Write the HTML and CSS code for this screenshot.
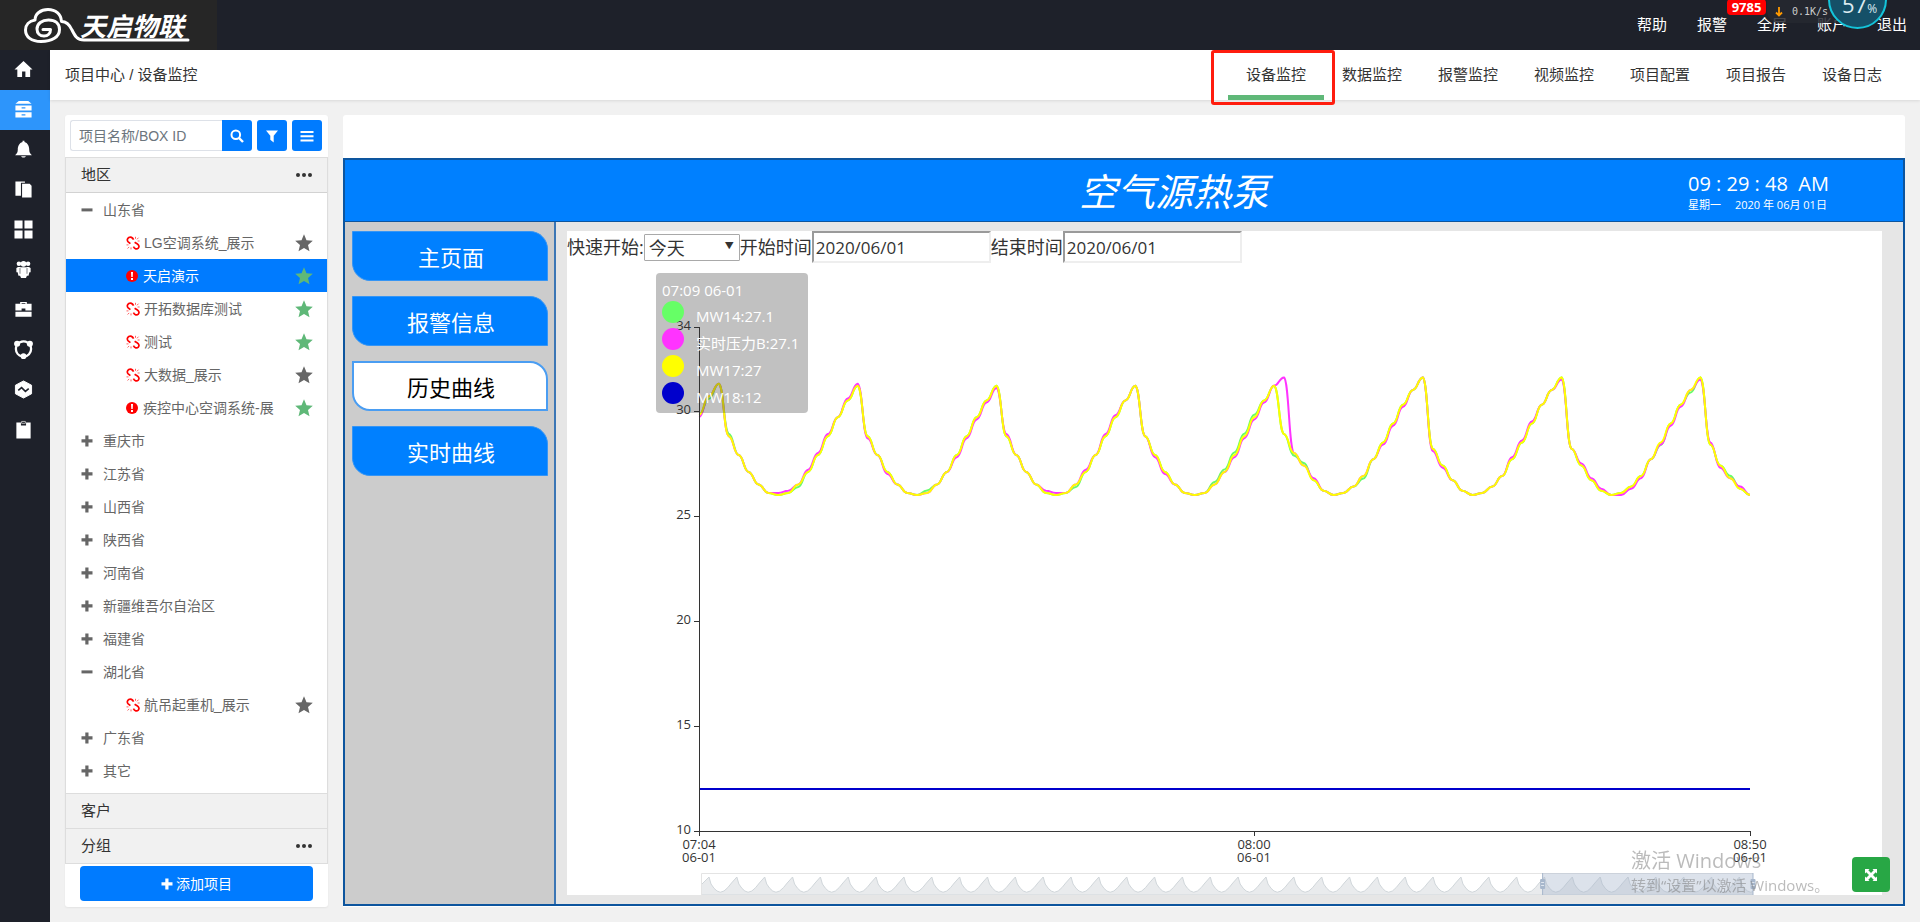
FILE: index.html
```html
<!DOCTYPE html>
<html lang="zh-CN">
<head>
<meta charset="utf-8">
<title>设备监控</title>
<link rel="stylesheet" href="styles.css">
</head>
<body>
<svg class="defs" aria-hidden="true">
  <symbol id="star" viewBox="0 0 18 18"><path d="M9 .3l2.500 5.900 6.300.5-4.800 4.200 1.500 6.300L9 13.900l-5.500 3.300 1.500-6.300L.2 6.700l6.300-.5z"/></symbol>
  <symbol id="plus" viewBox="0 0 12 12"><path d="M4.300.5h3.200v3.800h4v3.100h-4v4.100H4.300V7.400H.5V4.300h3.800z"/></symbol>
  <symbol id="minus" viewBox="0 0 12 12"><path d="M.5 4.400h11v3H.5z"/></symbol>
  <symbol id="unlink" viewBox="0 0 14 14"><g fill="none" stroke="#f00" stroke-width="1.700"><path d="M7.600 3.600C6.500 1.300 4.500.6 2.800 1.500 1 2.600.9 4.600 2.200 5.900l2.200 1.700"/><path d="M8.600 6.200l2.500 1.500c2 1.300 2.400 3.200 1.200 4.400-1.400 1.400-3.600 1-4.900-1.400"/></g><path d="M9.500.8v2M12.500 1.700L11 3.300M13.600 5h-2M.5 8.900h2M1.600 12.500l1.600-1.600M5 13.400v-2" stroke="#ff6060" fill="none"/></symbol>
  <symbol id="alert" viewBox="0 0 12 12"><circle cx="6" cy="6" r="6" fill="#f00"/><path d="M5 2h2l-.3 5H5.300zM5 8h2v2H5z" fill="currentColor"/></symbol>
</svg>

<header class="top">
  <a class="logo" href="#" aria-label="天启物联">
    <svg viewBox="0 0 217 50" width="217" height="50">
      <g fill="none" stroke="#fff" stroke-width="3" stroke-linecap="round" stroke-linejoin="round">
        <path d="M188 40H84c-7 0-9-4-12-10-2.500-5.500-5-8.500-10.500-8.500C61 14 55.500 9.500 48 9.500S35 14 35 20c-6 1-9.500 5-9.500 10 0 7 6 11.500 15.500 11.500 11 0 18.500-4.500 18.500-12 0-6-4.500-9.500-11-9.500S37 23.500 37 29c0 4.500 3 7 7 7s6.500-2.500 6.500-6.500H43"/>
      </g>
      <text x="80" y="36" class="logo-text">天启物联</text>
    </svg>
  </a>
  <nav class="top-nav">
    <a href="#">帮助</a>
    <a href="#">报警<span class="badge">9785</span></a>
    <a href="#">全屏</a>
    <a href="#">账户</a>
    <a href="#">退出</a>
  </nav>
  <div class="speed">
    <div class="speed-rate">
      <svg viewBox="0 0 8 10" width="8" height="10"><path d="M4 0v8M1 5.500l3 3 3-3" fill="none" stroke="#ff9a00" stroke-width="1.800"/></svg>
      <span>0.1K/s</span>
    </div>
    <div class="speed-ball"><span>57<small>%</small></span></div>
  </div>
</header>

<div class="shell">
  <nav class="rail">
    <a href="#" aria-label="首页"><svg viewBox="0 0 20 20"><path d="M10 1l9.500 9H17v8h-5v-6H8.500v6H3.500v-8H.5z"/></svg></a>
    <a href="#" class="on" aria-label="项目"><svg viewBox="0 0 20 20"><path d="M5 1h10l3.500 3h-17zM1.500 5.800h17v5.200h-17zM1.500 13h17v5.500h-17z"/><path d="M8 8.300h4M8 15.600h4" stroke="#2d95fb" stroke-width="1.300"/></svg></a>
    <a href="#" aria-label="报警"><svg viewBox="0 0 20 20"><path d="M9 .8h2v1.200c3.500 1 5 4.500 5 8 0 3 1.200 4.500 2.800 6H1.200C2.800 14.500 4 13 4 10c0-3.500 1.500-7 5-8zM7.500 17h5c-.5 2-4.500 2-5 0z"/></svg></a>
    <a href="#" aria-label="文档"><svg viewBox="0 0 20 20"><path d="M1.500 1.500h10V3H7.300v13.500H1.500zM8.500 4h8l2 2v12.500h-10z"/></svg></a>
    <a href="#" aria-label="应用"><svg viewBox="0 0 20 20"><path d="M.5.500h8.500V9H.5zM11 .5h8.500V9H11zM.5 11H9v8.500H.5zM11 11h8.500v8.500H11z"/></svg></a>
    <a href="#" aria-label="用户"><svg viewBox="0 0 20 20"><circle cx="10" cy="4" r="3"/><circle cx="5.200" cy="4" r="2.400"/><circle cx="14.800" cy="4" r="2.400"/><path d="M2.500 8.500C3.500 7 6 7 7 7.700h6c1-.7 3.500-.7 4.500.8v4.500h-1.300l-.9 3.500h-1.700l-1 2.500H7.400l-1-2.500H4.700L3.800 13H2.500z"/><path d="M6.300 8.500v6M13.700 8.500v6" stroke="#1e212a" stroke-width=".6"/></svg></a>
    <a href="#" aria-label="工具"><svg viewBox="0 0 20 20"><path d="M6.500 4V2h7v2h5v7H12V9H8v2H1.500V4zm1.500 0h4v-.8H8zM1.500 12.300h17v5.200h-17z"/></svg></a>
    <a href="#" aria-label="共享"><svg viewBox="0 0 20 20"><circle cx="10" cy="9.500" r="8" fill="none" stroke="#fff" stroke-width="2.400" stroke-dasharray="12 2 14 2"/><circle cx="3.300" cy="4" r="3.200"/><circle cx="16.700" cy="4" r="3.200"/><circle cx="10" cy="17" r="3"/></svg></a>
    <a href="#" aria-label="趋势"><svg viewBox="0 0 20 20"><path d="M10 1l8.500 4.500v9L10 19l-8.500-4.500v-9z" stroke="#fff" stroke-linejoin="round"/><path d="M4.500 11l3.500-3 4 4 3.500-3" fill="none" stroke="#1e212a" stroke-width="1.600"/></svg></a>
    <a href="#" aria-label="记录"><svg viewBox="0 0 20 20"><path d="M2.500 2.500h4.800v3.200h5.400V2.500h4.800v17h-15z"/><path d="M8 3.500v-2h4v2z" fill="none" stroke="#bbb"/></svg></a>
  </nav>

  <div class="page">
    <div class="crumbs">
      <div>项目中心 / 设备监控</div>
      <nav class="tabs">
        <a href="#" class="on">设备监控</a>
        <a href="#">数据监控</a>
        <a href="#">报警监控</a>
        <a href="#">视频监控</a>
        <a href="#">项目配置</a>
        <a href="#">项目报告</a>
        <a href="#">设备日志</a>
      </nav>
    </div>

    <div class="content">
      <aside class="projects">
        <form class="search">
          <div class="search-box">
            <input type="text" placeholder="项目名称/BOX ID" aria-label="项目名称/BOX ID">
            <button type="button" aria-label="搜索"><svg viewBox="0 0 14 14"><circle cx="5.800" cy="5.800" r="4.300" fill="none" stroke="#fff" stroke-width="2"/><path d="M9 9l4 4" stroke="#fff" stroke-width="2.400"/></svg></button>
          </div>
          <button type="button" aria-label="筛选"><svg viewBox="0 0 14 14"><path d="M1 1.500h12L8.700 6.800v6.700l-3.400-2.700v-4z"/></svg></button>
          <button type="button" aria-label="列表"><svg viewBox="0 0 14 14"><path d="M.5 2h13v2H.5zM.5 6.200h13v2H.5zM.5 10.400h13v2H.5z"/></svg></button>
        </form>
        <section class="groups">
          <h2>地区<button type="button" class="more" aria-label="更多"><i></i><i></i><i></i></button></h2>
          <ul class="tree">
            <li class="area"><svg><use href="#minus"/></svg>山东省</li>
            <li class="item"><svg><use href="#unlink"/></svg><a href="#">LG空调系统_展示</a><button type="button" class="star" aria-label="收藏"><svg><use href="#star"/></svg></button></li>
            <li class="item on"><svg class="warn"><use href="#alert"/></svg><a href="#">天启演示</a><button type="button" class="star fav" aria-label="收藏"><svg><use href="#star"/></svg></button></li>
            <li class="item"><svg><use href="#unlink"/></svg><a href="#">开拓数据库测试</a><button type="button" class="star fav" aria-label="收藏"><svg><use href="#star"/></svg></button></li>
            <li class="item"><svg><use href="#unlink"/></svg><a href="#">测试</a><button type="button" class="star fav" aria-label="收藏"><svg><use href="#star"/></svg></button></li>
            <li class="item"><svg><use href="#unlink"/></svg><a href="#">大数据_展示</a><button type="button" class="star" aria-label="收藏"><svg><use href="#star"/></svg></button></li>
            <li class="item"><svg class="warn"><use href="#alert"/></svg><a href="#">疾控中心空调系统-展</a><button type="button" class="star fav" aria-label="收藏"><svg><use href="#star"/></svg></button></li>
            <li class="area"><svg><use href="#plus"/></svg>重庆市</li>
            <li class="area"><svg><use href="#plus"/></svg>江苏省</li>
            <li class="area"><svg><use href="#plus"/></svg>山西省</li>
            <li class="area"><svg><use href="#plus"/></svg>陕西省</li>
            <li class="area"><svg><use href="#plus"/></svg>河南省</li>
            <li class="area"><svg><use href="#plus"/></svg>新疆维吾尔自治区</li>
            <li class="area"><svg><use href="#plus"/></svg>福建省</li>
            <li class="area"><svg><use href="#minus"/></svg>湖北省</li>
            <li class="item"><svg><use href="#unlink"/></svg><a href="#">航吊起重机_展示</a><button type="button" class="star" aria-label="收藏"><svg><use href="#star"/></svg></button></li>
            <li class="area"><svg><use href="#plus"/></svg>广东省</li>
            <li class="area"><svg><use href="#plus"/></svg>其它</li>
          </ul>
          <h2>客户</h2>
          <h2>分组<button type="button" class="more" aria-label="更多"><i></i><i></i><i></i></button></h2>
        </section>
        <button type="button" class="add"><svg><use href="#plus"/></svg>添加项目</button>
      </aside>

      <main class="monitor">
        <div class="scada">
          <div class="scada-head">
            <h1>空气源热泵</h1>
            <div class="clock"><div class="time">09 : 29 : 48&nbsp; AM</div><div class="date"><span>星期一</span><span>2020 年 06月 01日</span></div></div>
          </div>
          <div class="scada-body">
            <nav class="scada-nav">
              <button type="button">主页面</button>
              <button type="button">报警信息</button>
              <button type="button" class="on">历史曲线</button>
              <button type="button">实时曲线</button>
            </nav>
            <div class="stage">
              <div class="curve">
                <form class="range">
                  <label for="quick">快速开始:</label>
                  <span class="pick"><select id="quick"><option>今天</option></select></span>
                  <label for="from">开始时间</label>
                  <input id="from" type="text" value="2020/06/01">
                  <label for="to">结束时间</label>
                  <input id="to" type="text" value="2020/06/01">
                </form>
                <div class="chart">
                  <svg id="plot"></svg>
                  <div class="tip">
                    <p>07:09 06-01</p>
                    <ul>
                      <li class="green">MW14:27.1</li>
                      <li class="pink">实时压力B:27.1</li>
                      <li class="yellow">MW17:27</li>
                      <li class="blue">MW18:12</li>
                    </ul>
                  </div>
                </div>
              </div>
            </div>
          </div>
        </div>
      </main>
    </div>
  </div>
</div>

<div class="focus-box"></div>
<div class="activate"><p>激活 Windows</p><p class="hint">转到“设置”以激活 Windows。</p></div>
<button type="button" class="expand" aria-label="全屏"><svg viewBox="0 0 14 14"><path d="M1 1h4.500L4.300 2.300 7 5l2.700-2.700L8.500 1H13v4.500l-1.300-1.200L9 7l2.700 2.700L13 8.500V13H8.500l1.200-1.300L7 9l-2.700 2.700L5.500 13H1V8.500l1.300 1.200L5 7 2.300 4.300 1 5.500z"/></svg></button>
<script src="chart.js"></script>
</body>
</html>
```

FILE: styles.css
```css
* { box-sizing: border-box; }
body {
  margin: 0;
  min-height: 100vh;
  display: flex;
  flex-direction: column;
  background: #f1f1f1;
  color: #333;
  font: 15px/20px "Liberation Sans", "Noto Sans CJK SC", sans-serif;
}
a { color: inherit; text-decoration: none; }
ul, h1, h2, p { margin: 0; padding: 0; list-style: none; font-weight: 400; }
button, input, select { font: inherit; color: inherit; margin: 0; }
button { border: 0; padding: 0; background: none; cursor: pointer; }
svg { display: block; fill: currentColor; flex: none; }
.defs { position: absolute; width: 0; height: 0; }

.top {
  position: relative;
  height: 50px;
  display: flex;
  justify-content: space-between;
  background: #1e212a;
  color: #fff;
}
.logo { width: 217px; background: #262626; }
.logo-text {
  font: italic 700 26px "Noto Sans CJK SC", sans-serif;
  fill: #fff;
}
.top-nav { display: flex; padding-right: 13px; }
.top-nav a { position: relative; width: 60px; padding-top: 15px; padding-left: 15px; }
.top-nav a:last-child { width: 45px; }
.badge {
  position: absolute;
  top: -1px;
  left: 45px;
  width: 39px;
  height: 16px;
  border-radius: 4px;
  background: #f00;
  font: bold 13px/16px "Open Sans", sans-serif;
  text-align: center;
}
.speed { position: absolute; top: 0; right: 33px; width: 120px; height: 30px; }
.speed-rate {
  display: flex;
  align-items: center;
  gap: 9px;
  width: 90px;
  height: 23px;
  padding-left: 8px;
  border-radius: 0 0 0 12px;
  background: rgba(38, 40, 48, .85);
  color: #ccc;
  font: 10px/20px "DejaVu Sans Mono", monospace;
}
.speed-ball {
  position: absolute;
  right: 0;
  top: -30px;
  width: 59px;
  height: 59px;
  border: 2px solid #14c4da;
  border-radius: 50%;
  background: #155068;
  color: #dcebf0;
  font: 22px/24px "Open Sans", sans-serif;
  text-align: center;
  padding: 20px 0 0 4px;
}
.speed-ball small { font-size: 12px; }

.shell { flex: 1; display: flex; }
.rail { width: 50px; background: #1e212a; color: #fff; }
.rail a { display: flex; height: 40px; align-items: center; justify-content: center; padding: 0 4px 2px 0; }
.rail svg { width: 19px; height: 19px; }
.rail .on { background: #2d95fb; }
.page { flex: 1; min-width: 0; display: flex; flex-direction: column; }
.crumbs {
  display: flex;
  justify-content: space-between;
  height: 50px;
  padding: 0 20px 0 15px;
  background: #fff;
  box-shadow: 0 1px 3px rgba(0, 0, 0, .1);
  line-height: 50px;
}
.tabs { display: flex; }
.tabs a { width: 96px; text-align: center; }
.tabs .on { border-bottom: 5px solid #5fb878; }

.content { flex: 1; display: flex; gap: 15px; padding: 15px; }
.projects {
  display: flex;
  flex-direction: column;
  width: 263px;
  padding-top: 5px;
  border-radius: 3px;
  background: #fff;
  box-shadow: 0 1px 2px rgba(0, 0, 0, .06);
}
.search { display: flex; gap: 5px; padding: 0 6px 6px 5px; }
.search-box { display: flex; flex: 1; min-width: 0; }
.search input {
  flex: 1;
  min-width: 0;
  height: 31px;
  padding: 0 8px;
  border: 1px solid #dde1e8;
  border-right: 0;
  border-radius: 3px 0 0 3px;
  font-size: 14px;
}
.search input::placeholder { color: #6c757d; opacity: 1; }
.search button {
  display: flex;
  align-items: center;
  justify-content: center;
  width: 30px;
  height: 31px;
  border-radius: 3px;
  background: #007bff;
  color: #fff;
}
.search-box button { border-radius: 0 3px 3px 0; }
.search svg { width: 14px; height: 14px; }
.groups { border: 1px solid #ddd; }
.groups h2 {
  display: flex;
  justify-content: space-between;
  align-items: center;
  height: 35px;
  padding: 0 15px;
  border-top: 1px solid #ddd;
  background: #f1f1f1;
  font-size: 15px;
}
.groups h2:first-child { border-top: 0; border-bottom: 1px solid #d2d2d2; }
.more { display: flex; gap: 2px; }
.more i { width: 4px; height: 4px; border-radius: 50%; background: #333; }
.tree { padding-bottom: 6px; color: #666; font-size: 14px; }
.tree li { display: flex; align-items: center; height: 33px; padding: 0 14px 0 15px; }
.area svg { width: 12px; height: 12px; margin-right: 10px; }
.tree .item { padding-left: 60px; }
.item > svg { width: 14px; height: 14px; margin-right: 4px; color: #fff; }
.item > .warn { width: 12px; height: 12px; margin-right: 5px; }
.item a { flex: 1; white-space: nowrap; }
.item .star svg { width: 18px; height: 18px; }
.fav { color: #5fb878; }
.tree .on { background: #007bff; }
.tree .on a { color: #fff; }
.add {
  display: flex;
  align-items: center;
  justify-content: center;
  gap: 3px;
  height: 35px;
  margin: 2px 15px 5px;
  border-radius: 4px;
  background: #007bff;
  color: #fff;
  font-size: 14px;
}
.add svg { width: 12px; height: 12px; }

.monitor {
  flex: 1;
  min-width: 0;
  display: flex;
  padding: 43px 0 1px;
  border-radius: 3px 3px 0 0;
  background: #fff;
}
.scada {
  flex: 1;
  display: flex;
  flex-direction: column;
  min-width: 0;
  border: 2px solid #0d559e;
  background: #e6e6e6;
  font-family: "Open Sans", "Noto Sans CJK SC", sans-serif;
}
.scada-head {
  display: grid;
  grid-template-columns: 1fr auto 1fr;
  align-items: center;
  height: 62px;
  padding: 0 72px 0 172px;
  border-bottom: 1px solid #0d559e;
  background: #0080ff;
  color: #fff;
}
.scada-head h1 { grid-column: 2; font-style: italic; font-size: 38px; line-height: 56px; }
.clock { justify-self: end; width: 143px; padding-top: 3px; }
.time { font-size: 20px; line-height: 26px; white-space: nowrap; }
.date { display: flex; gap: 14px; font-size: 11px; line-height: 16px; white-space: nowrap; }
.scada-body { flex: 1; display: flex; }
.scada-nav {
  display: flex;
  flex-direction: column;
  gap: 15px;
  width: 211px;
  padding: 9px 6px 9px 7px;
  border-right: 2px solid #3b76b5;
  background: #ccc;
}
.scada-nav button {
  height: 50px;
  padding: 2px 0 0 2px;
  border: 1px solid #3595f5;
  border-radius: 0 18px 0 18px;
  background: #0080ff;
  color: #fff;
  font-size: 22px;
}
.scada-nav .on { border-width: 2px; border-color: #4a9df2; background: #fff; color: #000; }
.stage { flex: 1; min-width: 0; display: flex; padding: 9px 21px 9px 11px; }
.curve { flex: 1; min-width: 0; display: flex; flex-direction: column; background: #fff; }
.range { display: flex; align-items: center; height: 32px; font-size: 18px; line-height: 26px; }
.range label { white-space: nowrap; }
.range input {
  width: 179px;
  height: 32px;
  padding: 0 2px;
  border: 2px inset #eee;
  background: #fff;
  font-size: 17px;
}
.pick { position: relative; }
.pick::after { content: "▼"; position: absolute; right: 6px; top: 0; font-size: 9px; line-height: 24px; pointer-events: none; }
.pick select {
  display: block;
  width: 96px;
  height: 27px;
  padding: 0 4px;
  border: 1px solid #a9a9a9;
  border-radius: 1px;
  background: #fff;
  appearance: none;
}
.chart { position: relative; flex: 1; }
#plot { position: absolute; width: 100%; height: 100%; font-size: 13px; }
.tip {
  position: absolute;
  left: 89px;
  top: 10px;
  width: 152px;
  height: 140px;
  padding: 4px 6px;
  border-radius: 4px;
  background: rgba(50, 50, 50, .3);
  color: #fff;
  white-space: nowrap;
}
.tip p { line-height: 26px; }
.tip li { position: relative; padding-left: 34px; line-height: 27px; }
.tip li::before {
  content: "";
  position: absolute;
  left: 0;
  top: -2px;
  width: 22px;
  height: 22px;
  border-radius: 50%;
  background: currentColor;
}
.green::before { color: #6f6; }
.pink::before { color: #f3f; }
.yellow::before { color: #ff0; }
.blue::before { color: #00c; }

.focus-box {
  position: absolute;
  top: 50px;
  right: 585px;
  width: 124px;
  height: 55px;
  border: 3px solid #ff1d0e;
  border-radius: 3px;
  pointer-events: none;
}
.activate {
  position: fixed;
  right: 92px;
  bottom: 26px;
  width: 197px;
  color: rgba(120, 120, 120, .5);
  font: 20px/26px "Open Sans", "Noto Sans CJK SC", sans-serif;
  white-space: nowrap;
  pointer-events: none;
}
.activate .hint { font-size: 15px; line-height: 22px; }
.expand {
  position: fixed;
  right: 30px;
  bottom: 30px;
  display: flex;
  align-items: center;
  justify-content: center;
  width: 38px;
  height: 35px;
  border-radius: 4px;
  background: #28a745;
  color: #fff;
}
.expand svg { width: 14px; height: 14px; }
```

FILE: chart.js
```js
// One sample per minute, 07:04 to 08:50.
const early = [28.8, 27.9, 27.1, 26.5, 26.1, 26, 26.1, 26.5, 27.1, 27.9, 28.8, 29.7, 30.5, 31.2];
const late = [28.2, 27.4, 26.7, 26.2, 26, 26.1, 26.4, 26.9, 27.7, 28.5, 29.4, 30.3, 31, 31.6];
const yellow = [29.8, 30.7, 31.3, ...early, ...early, ...early, ...early,
  28.9, ...late.map((v, i) => (i === 0 ? 28 : v)), ...late, ...late, 28.4, 27.4, 26.8, 26.3, 26];
const shift = (list, set, d) => list.map((v, i) => (set.includes(i) ? v + d : v));
let pink = shift(yellow, [8, 9, 11, 12, 13, 15, 16, 31, 35, 36, 39, 41, 42, 62, 82, 83, 84, 89, 90, 91, 102, 105], 0.1);
pink = shift(pink, [0, 17, 19, 26, 27, 28, 29, 30, 46, 47, 54, 55, 56, 57, 69, 70, 71, 74, 75, 87, 93, 94, 95, 97, 98, 99, 101, 103], -0.1);
pink[59] = 31.6;
const green = shift(shift(yellow, [3, 23, 52, 53, 54, 55, 56, 61, 104], 0.12), [1, 10, 38, 60, 67, 97, 100], -0.12);

const plot = document.getElementById('plot');

function curve(values, px, py) {
  let d = `M${px(0)} ${py(values[0])}`;
  for (let i = 1; i < values.length; i++) {
    const x0 = px(i - 1), x1 = px(i), y0 = py(values[i - 1]), y1 = py(values[i]);
    const h = (x1 - x0) / 2, s = (y1 - y0) * 0.04;
    d += `C${x0 + h} ${y0 + s} ${x1 - h} ${y1 - s} ${x1} ${y1}`;
  }
  return d;
}

function draw() {
  const w = plot.clientWidth, h = plot.clientHeight;
  const left = 132, right = w - 132, top = 64, bottom = h - 64;
  const px = m => left + (right - left) * m / 106;
  const py = v => bottom - (bottom - top) * (v - 10) / 24;
  const line = (values, color) =>
    `<path d="${curve(values, px, py)}" fill="none" stroke="${color}" stroke-width="2"/>`;

  let s = line(green, '#6f6') + line(pink, '#f3f') + line(yellow, '#ff0');
  s += `<path d="M${left} ${py(12)}H${right}" stroke="#00c" stroke-width="2"/>`;
  s += `<path d="M${left + .5} ${top}V${bottom + 5}M${left - 5} ${bottom + .5}H${right}" stroke="#333" stroke-width="1" fill="none"/>`;
  for (const v of [10, 15, 20, 25, 30, 34]) {
    s += `<path d="M${left - 5} ${Math.round(py(v)) + .5}h5" stroke="#333"/>`;
    s += `<text x="${left - 8}" y="${py(v) + 3}" text-anchor="end" fill="#333">${v}</text>`;
  }
  for (const [m, t] of [[0, '07:04'], [56, '08:00'], [106, '08:50']]) {
    const x = Math.round(px(m));
    s += `<path d="M${x + .5} ${bottom}v5" stroke="#333"/>`;
    s += `<text x="${x}" y="${bottom + 18}" text-anchor="middle" fill="#333">${t}</text>`;
    s += `<text x="${x}" y="${bottom + 31}" text-anchor="middle" fill="#333">06-01</text>`;
  }

  // Overview strip with the zoom window.
  const a = left + 2, b = right + 3, y = h - 22;
  let wave = `M${a} ${h - 10}`;
  for (let x = a + 8; x < b + 28; x += 27.85) {
    wave += `L${x} ${y + 4}l2 7q3 5 6 7q3 2.500 7 0q4 -3 7.500 -8`;
  }
  const sel = a + (b - a) * 0.8;
  s += `<clipPath id="strip"><rect x="${a}" y="${y}" width="${b - a}" height="22"/></clipPath>`;
  s += `<g clip-path="url(#strip)"><path d="${wave}L${b + 40} ${h}H${a}z" fill="#e9ebed" stroke="#d0d6da"/></g>`;
  s += `<path d="M${a + .5} ${h}V${y + .5}H${b}" fill="none" stroke="#e4e4e4"/>`;
  s += `<rect x="${sel}" y="${y}" width="${b - sel}" height="22" fill="#a7b7cc" fill-opacity=".4"/>`;
  for (const x of [sel, b]) {
    s += `<path d="M${x} ${y}v22" stroke="#a7b7cc"/><rect x="${x - 2.5}" y="${y + 6}" width="5" height="10" rx="1" fill="#a7b7cc"/>`;
    s += `<path d="M${x - 1.5} ${y + 9.5}h3m-3 3h3" stroke="#dfe6ef"/>`;
  }
  plot.innerHTML = s;
}

draw();
window.addEventListener('resize', draw);
```
